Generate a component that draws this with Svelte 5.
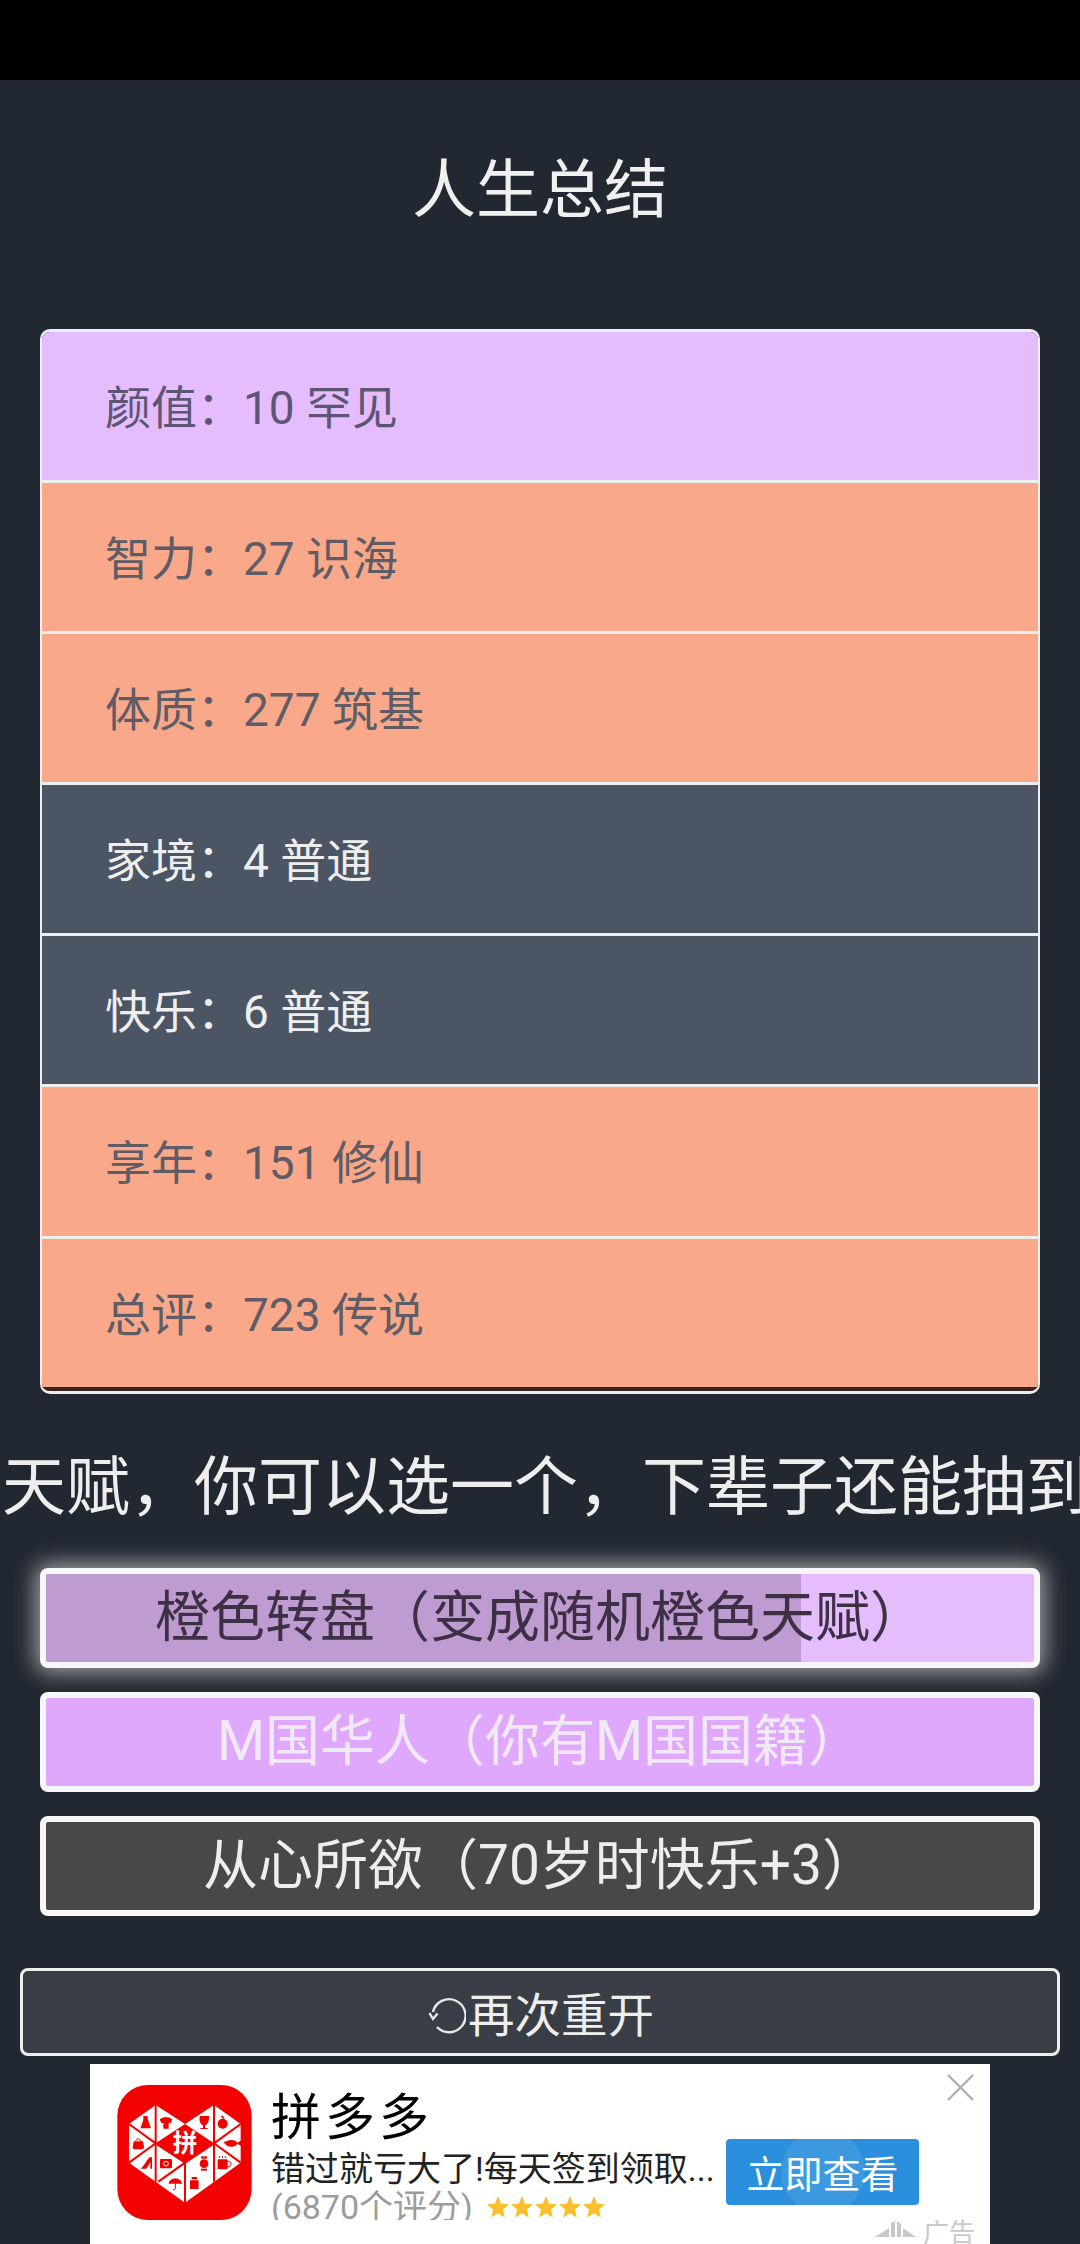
<script>
  const rows = [
    { label: "颜值：10 罕见", grade: "purple" },
    { label: "智力：27 识海", grade: "orange" },
    { label: "体质：277 筑基", grade: "orange" },
    { label: "家境：4 普通", grade: "plain" },
    { label: "快乐：6 普通", grade: "plain" },
    { label: "享年：151 修仙", grade: "orange" },
    { label: "总评：723 传说", grade: "orange" },
  ];

  const talents = [
    { name: "橙色转盘（变成随机橙色天赋）", kind: "picked", progress: 76.4 },
    { name: "M国华人（你有M国国籍）", kind: "purple" },
    { name: "从心所欲（70岁时快乐+3）", kind: "grey" },
  ];

  const stars = [0, 1, 2, 3, 4];
</script>

<div class="statusbar"></div>

<main>
  <h1>人生总结</h1>

  <ul class="summary">
    {#each rows as row}
      <li class={row.grade}>{row.label}</li>
    {/each}
  </ul>

  <div class="hint"><span>天赋，你可以选一个，下辈子还能抽到</span></div>

  <div class="talents">
    {#each talents as talent}
      <div class="talent {talent.kind}">
        {#if talent.progress}
          <div class="progress" style="width: {talent.progress}%"></div>
        {/if}
        <span>{talent.name}</span>
      </div>
    {/each}
  </div>

  <button class="restart">
    <svg width="38" height="38" viewBox="0 0 38 38" fill="none" stroke="#e8e8ea" stroke-width="2.4">
      <path d="M5 16 A16.5 16.5 0 1 1 9 31" />
      <path d="M1.5 17 L5 23 L9.5 17.5" />
    </svg>
    <span>再次重开</span>
  </button>

  <aside class="ad">
    <svg class="close" width="27" height="27" viewBox="0 0 27 27" stroke="#aeaeae" stroke-width="2.4">
      <path d="M1 1 L26 26 M26 1 L1 26" />
    </svg>

    <svg class="logo" width="135" height="135" viewBox="82 105 403 405">
      <rect x="82" y="105" width="403" height="405" rx="92" fill="#f30000" />
      <path
        fill="#fff"
        d="M197 165 L285 222 L372 165 L452 222 L452 338 L285 458 L117 338 L117 222 Z"
      />
      <path fill="#f30000" d="M197 280 L285 222 L372 280 L285 338 Z" />
      <g stroke="#f30000" stroke-width="6" fill="none">
        <path d="M197 165 V395 M372 165 V395 M117 222 L197 280 L117 338 M452 222 L372 280 L452 338 M285 338 V458" />
        <path d="M197 280 L285 338 L205 395 M372 280 L285 338" />
      </g>
      <g fill="#f30000">
        <path d="M160 198 h13 l1 12 l9 25 h-32 l9-25z" />
        <path d="M209 208 l12-6 h14 l12 6 l-5 11 h-6 v17 h-16 v-17 h-6z" />
        <path d="M329 198 h28 q1 24-12 28 v8 h8 v3 h-22 v-3 h8 v-8 q-13-4-10-28z" />
        <circle cx="398" cy="221" r="15" />
        <path d="M396 196 l8 8 l-4 3 l-7-7z" />
        <path d="M131 274 h28 l3 18 q0 6-6 6 h-22 q-6 0-6-6z" />
        <path d="M136 274 q9-16 18 0" fill="none" stroke="#f30000" stroke-width="3" />
        <ellipse cx="424" cy="280" rx="18" ry="10" />
        <path d="M440 280 l14-9 v18z M400 276 l10-2 v12z" />
        <path d="M186 322 v34 h-5 v-20 l-12 20 h-17 q6-5 12-14 q8-12 14-20z" />
        <rect x="210" y="327" width="36" height="28" rx="3" />
        <circle cx="342" cy="341" r="13" />
        <rect x="333" y="319" width="18" height="7" />
        <rect x="333" y="356" width="18" height="6" />
        <rect x="383" y="328" width="30" height="30" rx="3" />
        <path d="M413 334 q12 0 10 9 q-2 8-10 8" fill="none" stroke="#f30000" stroke-width="3" />
        <path d="M388 318 v6 M397 318 v6 M406 318 v6" stroke="#f30000" stroke-width="3" />
        <path d="M236 401 a20 16 0 0 1 40 0z" />
        <path d="M256 400 v16 q0 5-7 3" fill="none" stroke="#f30000" stroke-width="3" />
        <rect x="300" y="391" width="26" height="26" rx="2" />
        <rect x="305" y="381" width="16" height="7" />
      </g>
      <circle cx="228" cy="341" r="7" fill="none" stroke="#fff" stroke-width="3" />
      <text x="285" y="305" text-anchor="middle" class="logotext">拼</text>
    </svg>

    <div class="info">
      <div class="app">拼多多</div>
      <div class="desc">错过就亏大了!每天签到领取...</div>
      <div class="rating">
        <span>(6870个评分)</span>
        <svg width="119" height="22" viewBox="0 0 119 22" fill="#fbbf2d">
          {#each stars as s}
            <path
              transform="translate({s * 24} 0)"
              d="M11 0 L14 7.5 L22 8.2 L16 13.5 L17.8 21.5 L11 17.2 L4.2 21.5 L6 13.5 L0 8.2 L8 7.5 Z"
            />
          {/each}
        </svg>
      </div>
    </div>

    <div class="cta"><i></i><span>立即查看</span></div>

    <div class="adtag">
      <svg width="42" height="20" viewBox="0 0 42 20" fill="#c9c9c9">
        <path d="M0 17 L14 8 V17 Z M16 17 V3 L20 1 V17 Z M22 17 V1 L26 4 V17 Z M28 17 V8 L41 17 Z" />
      </svg>
      <span>广告</span>
    </div>
  </aside>
</main>

<style>
  :global(html),
  :global(body) {
    margin: 0;
    height: 2244px;
    overflow: hidden;
    background: #222831;
  }

  :global(body) {
    font-family: Roboto, "Noto Sans CJK SC", sans-serif;
    color: #eeeeee;
  }

  .statusbar {
    height: 80px;
    background: #000;
  }

  main {
    display: flex;
    flex-direction: column;
    align-items: center;
  }

  h1 {
    margin: 66px 0 0;
    height: 90px;
    line-height: 90px;
    font-size: 64px;
    font-weight: 400;
    color: #f0f0f0;
  }

  .summary {
    list-style: none;
    margin: 93px 0 0;
    padding: 0;
    width: 1000px;
    box-sizing: border-box;
    border: 2px solid #eeeeee;
    border-top-width: 3px;
    border-bottom-width: 3px;
    border-radius: 10px;
    overflow: hidden;
  }

  .summary li {
    height: 148.1px;
    line-height: 152px;
    padding-left: 63px;
    font-size: 46px;
    border-bottom: 3px solid #eeeeee;
    color: #5f5c6b;
  }

  .summary li:last-child {
    border-bottom: 4px solid #3a2422;
  }

  .summary .purple {
    background: #e5bcfd;
    color: #5c5674;
  }

  .summary .orange {
    background: #f9a98a;
    color: #5f5c66;
  }

  .summary .plain {
    background: #4b5563;
    color: #eeeeee;
  }

  .hint {
    margin-top: 49px;
    width: 1080px;
    height: 90px;
    line-height: 90px;
    padding-left: 2px;
    box-sizing: border-box;
    overflow: hidden;
    white-space: nowrap;
    font-size: 64px;
    color: #eeeeee;
  }

  .talents {
    margin-top: 35px;
    display: flex;
    flex-direction: column;
    gap: 24px;
  }

  .talent {
    position: relative;
    width: 1000px;
    height: 100px;
    box-sizing: border-box;
    border: 6px solid #f7f7f9;
    border-radius: 8px;
    display: flex;
    align-items: center;
    justify-content: center;
    font-size: 55px;
    padding-bottom: 12px;
    overflow: hidden;
  }

  .talent span {
    position: relative;
  }

  .talent.picked {
    background: #e5bcfd;
    color: #3d3044;
    overflow: visible;
    box-shadow: 0 0 22px 4px rgba(255, 255, 255, 0.6);
  }

  .talent.purple {
    background: #e0a8fc;
    color: #f2e9f7;
  }

  .talent.grey {
    background: #484848;
    color: #eeeeee;
  }

  .progress {
    position: absolute;
    left: 0;
    top: 0;
    bottom: 0;
    background: rgba(0, 0, 0, 0.17);
  }

  .restart {
    margin-top: 52px;
    width: 1040px;
    height: 88px;
    box-sizing: border-box;
    border: 3px solid #eeeeee;
    border-radius: 8px;
    background: #393e46;
    color: #eeeeee;
    font-family: inherit;
    font-size: 46.5px;
    display: flex;
    align-items: center;
    justify-content: center;
    gap: 2px;
    padding: 0 0 0 2px;
  }

  .restart svg {
    margin-top: 6px;
  }

  .ad {
    position: relative;
    margin-top: 8px;
    width: 900px;
    height: 180px;
    background: #fff;
    overflow: hidden;
    display: flex;
    align-items: flex-start;
  }

  .close {
    position: absolute;
    right: 16px;
    top: 10px;
  }

  .logo {
    flex: none;
    margin: 21px 0 0 27px;
  }

  .logotext {
    font-size: 74px;
    font-weight: 700;
    fill: #fff;
  }

  .info {
    margin-left: 19px;
    width: 444px;
    height: 156px;
    overflow: hidden;
    color: #222;
  }

  .app {
    margin-top: 26px;
    font-size: 50px;
    letter-spacing: 4px;
    line-height: 56px;
    color: #000;
  }

  .desc {
    font-size: 34px;
    line-height: 46px;
    white-space: nowrap;
  }

  .rating {
    display: flex;
    align-items: center;
    gap: 14px;
    margin-top: -8px;
    font-size: 34px;
    line-height: 46px;
    color: #9c9c9c;
    white-space: nowrap;
  }

  .cta {
    position: relative;
    flex: none;
    margin: 75px 0 0 11px;
    width: 193px;
    height: 66px;
    border-radius: 4px;
    background: #2a8fdc;
    color: #fff;
    font-size: 38px;
    display: flex;
    align-items: center;
    justify-content: center;
    overflow: hidden;
  }

  .cta i {
    position: absolute;
    left: 55px;
    top: -9px;
    width: 84px;
    height: 84px;
    border-radius: 50%;
    background: rgba(255, 255, 255, 0.09);
  }

  .cta span {
    position: relative;
  }

  .adtag {
    position: absolute;
    right: 15px;
    top: 148px;
    display: flex;
    align-items: center;
    gap: 6px;
    font-size: 26px;
    color: #c9c9c9;
  }
</style>
